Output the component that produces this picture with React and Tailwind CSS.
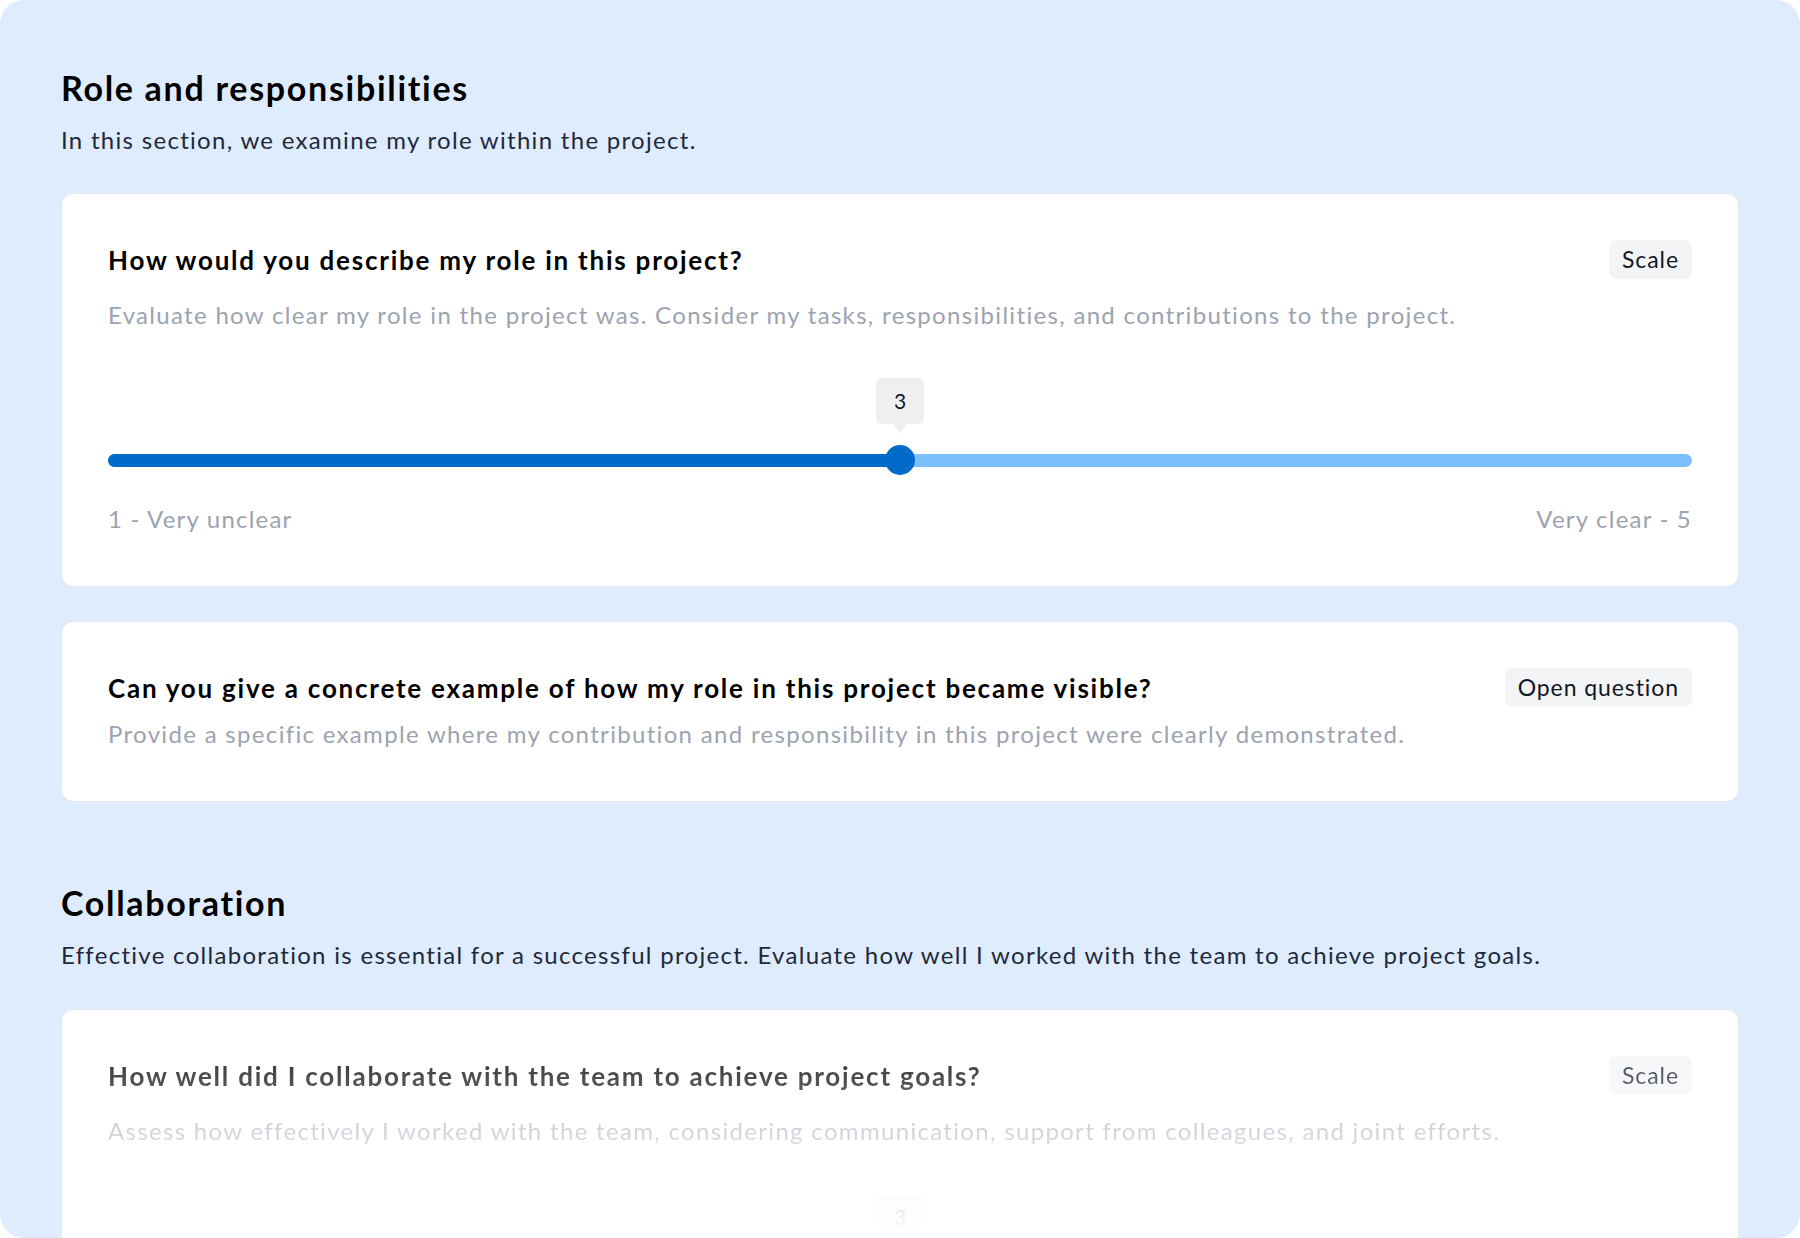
import React from "react";

const font = { fontFamily: "Lato, 'Noto Sans', 'Liberation Sans', sans-serif" };

function Badge({ children }) {
  return (
    <span className="shrink-0 rounded-[8px] bg-[#f3f4f6] px-[13px] h-[39px] flex items-center text-[23px] tracking-[0.04em] text-[#111827] leading-none">
      {children}
    </span>
  );
}

function ScaleSlider({ value, min, max, left, right }) {
  const pct = ((value - min) / (max - min)) * 100;
  return (
    <div>
      <div className="relative mt-[48px] pt-[67px]">
        <div
          className="absolute top-0 -translate-x-1/2 flex flex-col items-center"
          style={{ left: `${pct}%` }}
        >
          <div className="w-[48px] h-[46px] rounded-[5px] bg-[#efefef] flex items-center justify-center text-[21px] text-[#111827]">
            {value}
          </div>
          <div className="w-0 h-0 border-l-[7px] border-r-[7px] border-t-[9px] border-l-transparent border-r-transparent border-t-[#efefef]" />
        </div>
        <div className="relative h-[30px] flex items-center">
          <div className="w-full h-[13px] rounded-full bg-[#7cc0fb] flex">
            <div className="h-full rounded-full bg-[#006bc9]" style={{ width: `${pct}%` }} />
          </div>
          <div
            className="absolute top-0 w-[30px] h-[30px] rounded-full bg-[#006bc9] -translate-x-1/2"
            style={{ left: `${pct}%` }}
          />
        </div>
      </div>
      {left && (
        <div className="mt-[29px] flex justify-between text-[24px] tracking-[0.05em] leading-[30px] text-[#9ca3af]">
          <span>{left}</span>
          <span>{right}</span>
        </div>
      )}
    </div>
  );
}

function QuestionCard({ title, badge, description, scale, faded }) {
  return (
    <div className="rounded-[12px] border border-[#e5e7eb] bg-white">
      <div
        className={
          faded
            ? "px-[46px] pt-[46px] pb-[52px] [mask-image:linear-gradient(to_bottom,black_0px,transparent_225px)]"
            : "px-[46px] pt-[46px] pb-[52px]"
        }
      >
        <div className="flex items-center justify-between gap-6">
          <h3 className="text-[26px] leading-[32px] tracking-[0.068em] font-bold text-black">{title}</h3>
          <Badge>{badge}</Badge>
        </div>
        <p
          className={`${scale ? "mt-[21px]" : "mt-[12px]"} text-[24px] leading-[30px] tracking-[0.055em] text-[#9ca3af]`}
        >
          {description}
        </p>
        {scale && <ScaleSlider {...scale} />}
      </div>
    </div>
  );
}

function SectionHeader({ title, subtitle }) {
  return (
    <div>
      <h2 className="text-[34px] leading-[36px] tracking-[0.05em] font-bold text-black">{title}</h2>
      <p className="mt-[19px] text-[24px] leading-[30px] tracking-[0.054em] text-[#1e293b]">{subtitle}</p>
    </div>
  );
}

export default function App() {
  return (
    <div className="bg-white" style={font}>
      <div className="h-[1238px] overflow-hidden rounded-[24px] bg-[#dfecfd] px-[61px] pt-[70px]">
        <SectionHeader
          title="Role and responsibilities"
          subtitle="In this section, we examine my role within the project."
        />
        <div className="mt-[38px] flex flex-col gap-[34px]">
          <QuestionCard
            title="How would you describe my role in this project?"
            badge="Scale"
            description="Evaluate how clear my role in the project was. Consider my tasks, responsibilities, and contributions to the project."
            scale={{ value: 3, min: 1, max: 5, left: "1 - Very unclear", right: "Very clear - 5" }}
          />
          <QuestionCard
            title="Can you give a concrete example of how my role in this project became visible?"
            badge="Open question"
            description="Provide a specific example where my contribution and responsibility in this project were clearly demonstrated."
          />
        </div>

        <div className="mt-[83px]">
          <SectionHeader
            title="Collaboration"
            subtitle="Effective collaboration is essential for a successful project. Evaluate how well I worked with the team to achieve project goals."
          />
        </div>
        <div className="mt-[39px]">
          <QuestionCard
            faded
            title="How well did I collaborate with the team to achieve project goals?"
            badge="Scale"
            description="Assess how effectively I worked with the team, considering communication, support from colleagues, and joint efforts."
            scale={{ value: 3, min: 1, max: 5 }}
          />
        </div>
      </div>
    </div>
  );
}
